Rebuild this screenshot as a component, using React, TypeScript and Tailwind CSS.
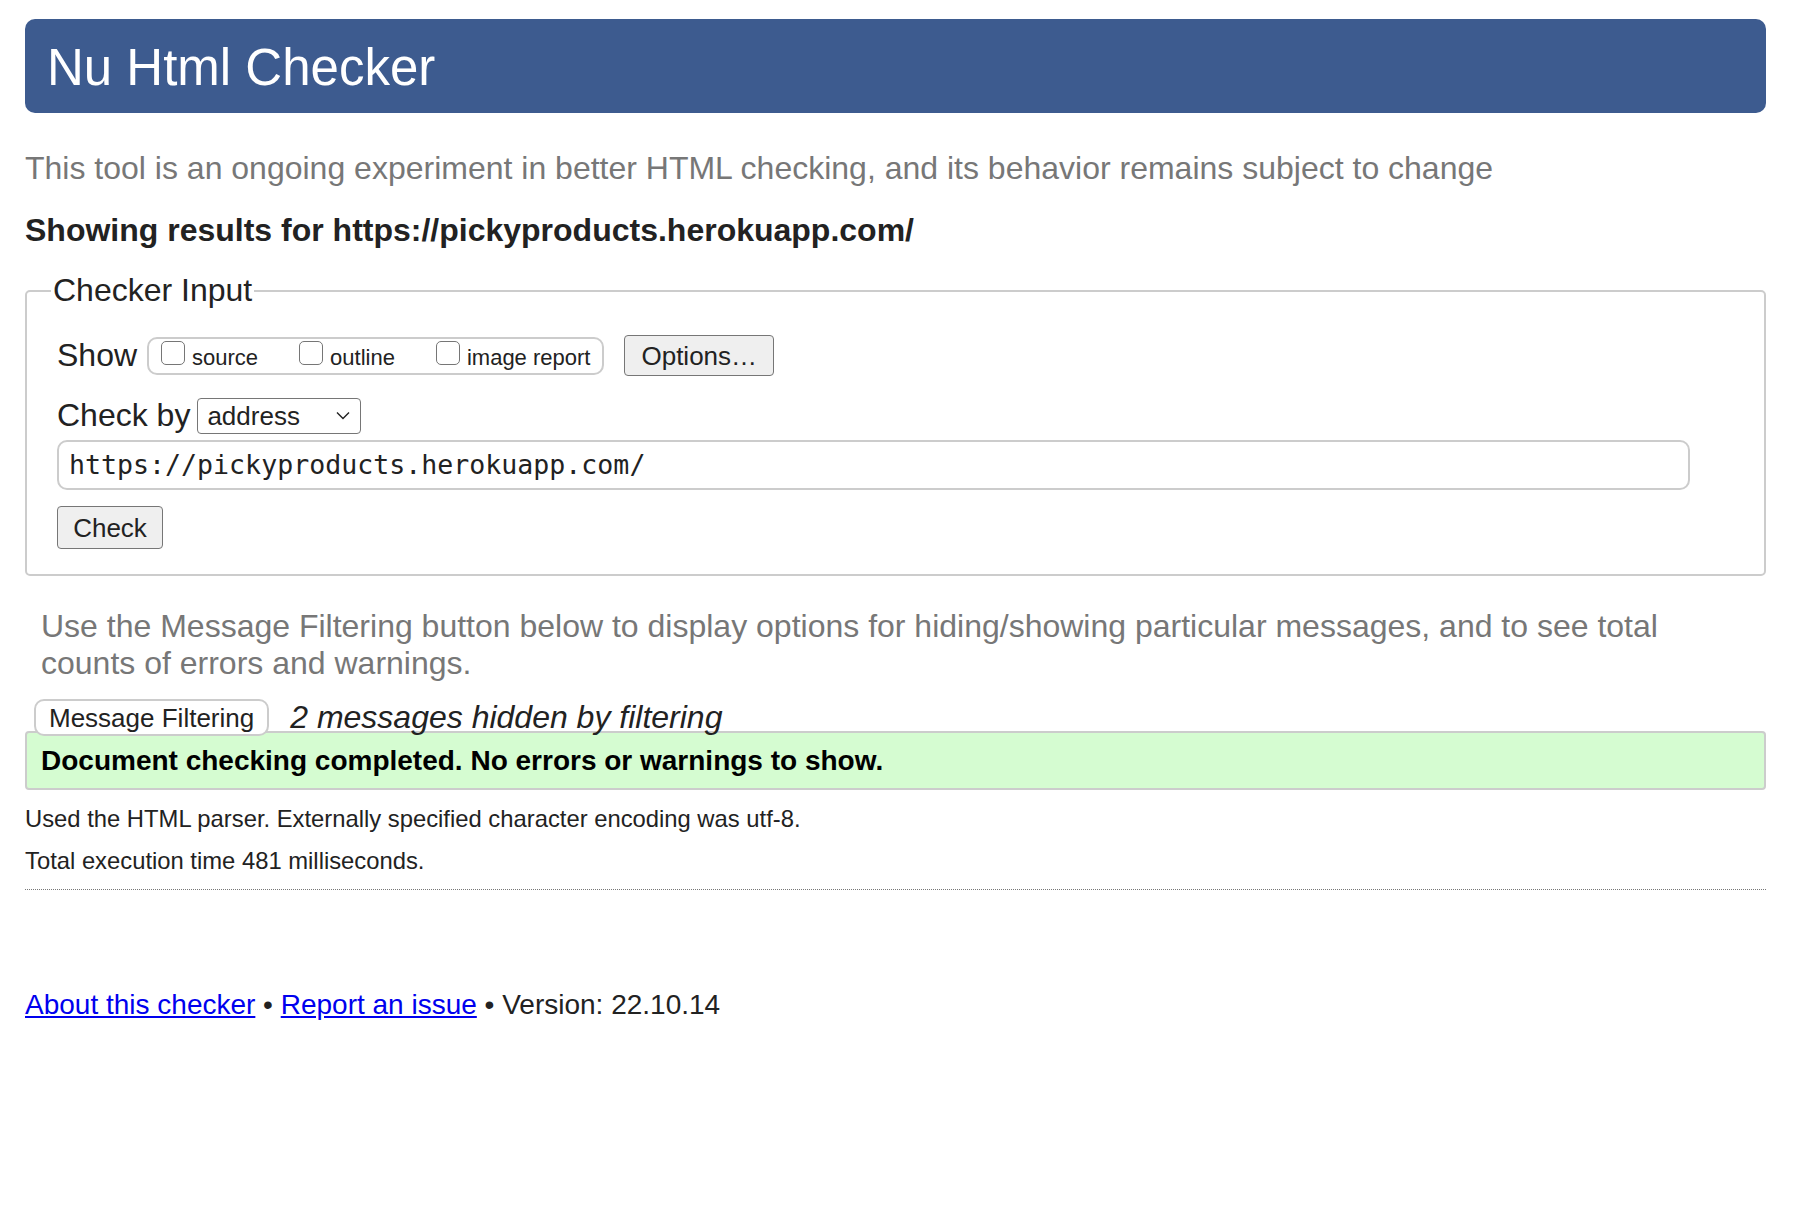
const sans = "font-['Liberation_Sans',Arial,Helvetica,sans-serif]";

const showOptions = ["source", "outline", "image report"];

function Tick() {
  return <span className="inline-block w-[24px] h-[24px] mr-[7px] align-baseline rounded-[5px] border-[1.5px] border-[#767676] bg-white" />;
}

export default function App() {
  return (
    <div className={`${sans} bg-white text-[#222] min-h-[1230px] pl-[25px] pr-[36px] pt-[19px]`}>
      <header className="h-[94px] rounded-[10px] bg-[#3d5b8f] pl-[22px] flex items-center">
        <h1 className="text-[51px] leading-none text-white pt-[2px]">Nu Html Checker</h1>
      </header>

      <p className="mt-[37px] text-[32px] leading-[37px] text-[#777]">
        This tool is an ongoing experiment in better HTML checking, and its behavior remains subject to change
      </p>
      <p className="mt-[25px] text-[32px] leading-[37px] font-bold">
        Showing results for https://pickyproducts.herokuapp.com/
      </p>

      <fieldset className="mt-[23px] border-2 border-[#ccc] rounded-[5px] px-[24px] pt-[26px] pb-[25px]">
        <legend className="px-[2px] text-[32px] leading-[37px]">Checker Input</legend>
        <div className="pl-[6px] flex flex-col">
          <div className="flex items-center h-[41px]">
            <span className="text-[32px] leading-[37px]">Show</span>
            <div className="ml-[10px] h-[38px] flex items-center gap-[41px] pl-[12px] pr-[12px] border-2 border-[#ccc] rounded-[10px]">
              {showOptions.map((o) => (
                <label key={o} className="text-[22px] leading-[25px] whitespace-nowrap">
                  <Tick />
                  {o}
                </label>
              ))}
            </div>
            <button className="ml-[20px] h-[41px] px-[16px] text-[26px] leading-none bg-[#efefef] border-[1.5px] border-[#767676] rounded-[4px]">
              Options…
            </button>
          </div>

          <div className="mt-[21px] flex items-center h-[37px]">
            <span className="text-[32px] leading-[37px]">Check by</span>
            <div className="ml-[7px] w-[164px] h-[36px] flex items-center justify-between pl-[9px] pr-[10px] border-[1.5px] border-[#767676] rounded-[4px] bg-white">
              <span className="text-[26px] leading-none">address</span>
              <svg width="14" height="9" viewBox="0 0 14 9" fill="none" stroke="#222" strokeWidth="1.4">
                <path d="M1 1.5 7 7.5 13 1.5" />
              </svg>
            </div>
          </div>

          <div className="mt-[6px] w-[1633px] h-[50px] flex items-center px-[10px] border-2 border-[#ccc] rounded-[10px]">
            <span className="font-['DejaVu_Sans_Mono',monospace] text-[26.6px] leading-none">
              https://pickyproducts.herokuapp.com/
            </span>
          </div>

          <div className="mt-[16px]">
            <button className="w-[106px] h-[43px] text-[26px] leading-none bg-[#efefef] border-[1.5px] border-[#767676] rounded-[4px]">
              Check
            </button>
          </div>
        </div>
      </fieldset>

      <p className="mt-[32px] px-[16px] text-[32px] leading-[37px] text-[#777]">
        Use the Message Filtering button below to display options for hiding/showing particular messages, and to see total counts of errors and warnings.
      </p>

      <div className="mt-[17px] -mb-[5px] flex items-end">
        <button className="relative z-10 ml-[9px] h-[37px] px-[13px] text-[26px] leading-none bg-white border-2 border-[#ccc] rounded-[10px]">
          Message Filtering
        </button>
        <span className="ml-[21px] text-[32px] leading-[37px] italic">2 messages hidden by filtering</span>
      </div>
      <div className="h-[59px] flex items-center pl-[14px] bg-[#d5fcd1] border-2 border-[#ccc] rounded-[4px]">
        <span className="text-[28px] leading-none font-bold text-black">
          Document checking completed. No errors or warnings to show.
        </span>
      </div>

      <p className="mt-[15px] text-[23.8px] leading-[27px]">
        Used the HTML parser. Externally specified character encoding was utf-8.
      </p>
      <p className="mt-[15px] text-[23.8px] leading-[27px]">Total execution time 481 milliseconds.</p>
      <div className="mt-[15px] border-t border-dotted border-[#777]" />

      <p className="mt-[99px] text-[28px] leading-[32px]">
        <a href="#" className="text-[#0000ee] underline">About this checker</a>
        {" • "}
        <a href="#" className="text-[#0000ee] underline">Report an issue</a>
        {" • Version: 22.10.14"}
      </p>
    </div>
  );
}
